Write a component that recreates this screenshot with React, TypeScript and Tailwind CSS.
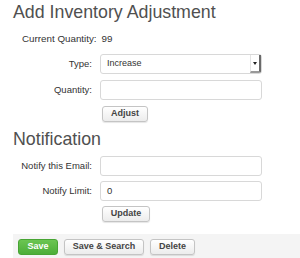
import { ReactNode } from 'react';

const Row = ({ label, children, mb }: { label: string; children: ReactNode; mb: string }) => (
  <div className={`flex items-center h-[20px] ${mb}`}>
    <div className="w-[100px] shrink-0 pr-[8px] text-right text-[9.5px] text-[#333]">{label}</div>
    <div>{children}</div>
  </div>
);

const Input = ({ value = '' }: { value?: string }) => (
  <div className="w-[162px] h-[20px] border border-[#d8d8d8] rounded-[3px] bg-white px-[6px] flex items-center text-[9.5px] text-[#333]">
    {value}
  </div>
);

const Btn = ({ children, w }: { children: ReactNode; w: string }) => (
  <div
    className={`${w} h-[16px] border border-[#c4c4c4] rounded-[3px] bg-gradient-to-b from-white to-[#ececec] flex items-center justify-center text-[9px] font-bold text-[#444] shadow-[0_1px_1px_rgba(0,0,0,0.1)]`}
  >
    {children}
  </div>
);

export default function App() {
  return (
    <div className="w-[300px] h-[258px] bg-white overflow-hidden" style={{ fontFamily: '"Liberation Sans", Arial, sans-serif' }}>
      <div className="pl-[13px] pt-[1px] text-[17.8px] leading-[22px] text-[#505050]">Add Inventory Adjustment</div>

      <div className="pl-[22px] mt-[9px] text-[9.8px] leading-[14px] text-[#333] flex gap-[5px]">
        <span>Current Quantity:</span>
        <span>99</span>
      </div>

      <div className="mt-[8px]">
        <Row label="Type:" mb="mb-[6px]">
          <div className="w-[162px] h-[20px] border border-[#d8d8d8] rounded-[3px] bg-white flex items-stretch text-[9px] text-[#333]">
            <div className="flex-1 px-[6px] flex items-center">Increase</div>
            <div className="w-[11px] border-l border-[#e4e4e4] border-r-2 border-b-2 border-r-[#6a6a6a] border-b-[#9a9a9a] rounded-br-[2px] flex items-center justify-center">
              <div className="w-0 h-0 border-l-[2.5px] border-r-[2.5px] border-t-[3px] border-l-transparent border-r-transparent border-t-[#222]" />
            </div>
          </div>
        </Row>
        <Row label="Quantity:" mb="mb-[6px]">
          <Input />
        </Row>
        <div className="pl-[102px]">
          <Btn w="w-[46px]">Adjust</Btn>
        </div>
      </div>

      <div className="pl-[13px] mt-[6px] text-[17.8px] leading-[22px] text-[#505050]">Notification</div>

      <div className="mt-[6px]">
        <Row label="Notify this Email:" mb="mb-[5px]">
          <Input />
        </Row>
        <Row label="Notify Limit:" mb="mb-[5px]">
          <Input value="0" />
        </Row>
        <div className="pl-[102px]">
          <Btn w="w-[48px]">Update</Btn>
        </div>
      </div>

      <div className="ml-[13px] mt-[12px] h-[26px] bg-[#f4f4f4] flex items-center gap-[6px] pl-[5px]">
        <div className="w-[40px] h-[16px] rounded-[3px] bg-gradient-to-b from-[#6bc552] to-[#4cae38] border border-[#48a534] flex items-center justify-center text-[9px] font-bold text-white">
          Save
        </div>
        <Btn w="w-[80px]">Save &amp; Search</Btn>
        <Btn w="w-[45px]">Delete</Btn>
      </div>
    </div>
  );
}
